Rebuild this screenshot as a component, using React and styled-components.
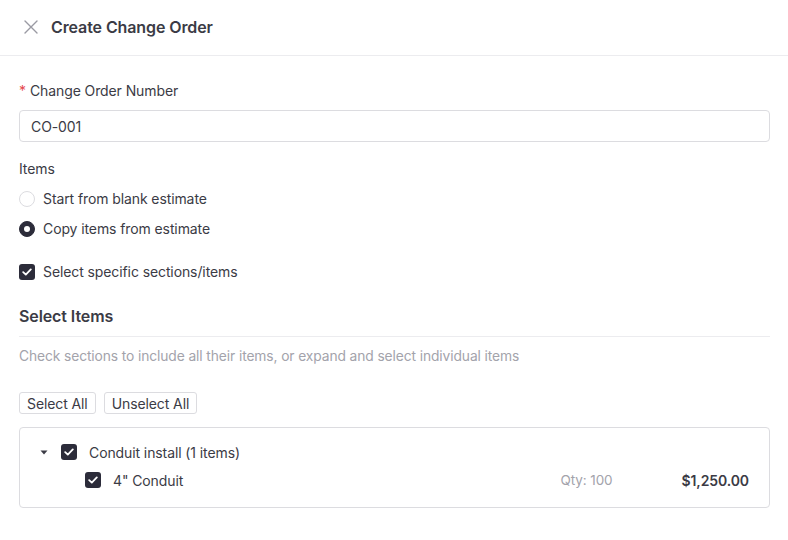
import React from "react";
import styled, { createGlobalStyle } from "styled-components";

const GlobalStyle = createGlobalStyle`
  html, body {
    margin: 0;
    padding: 0;
    background: #ffffff;
    font-family: Inter, "Noto Sans", sans-serif;
    color: #3b3b45;
    letter-spacing: -0.1px;
  }
  * { box-sizing: border-box; }
`;

const Page = styled.div`
  width: 788px;
  min-height: 540px;
  background: #fff;
`;

const Header = styled.div`
  height: 56px;
  display: flex;
  align-items: center;
  gap: 13px;
  padding: 0 22px 1px 24px;
  border-bottom: 1px solid #ececef;
`;

const CloseButton = styled.button`
  border: none;
  background: none;
  padding: 0;
  width: 14px;
  height: 14px;
  display: flex;
  cursor: pointer;
`;

const Title = styled.h1`
  margin: 0;
  font-size: 16px;
  font-weight: 600;
  color: #3b3b45;
`;

const Body = styled.div`
  padding: 24px 18px 0 19px;
`;

const Label = styled.div`
  font-size: 14px;
  color: #3b3b45;
  line-height: 22px;
  margin-bottom: 8px;
`;

const Required = styled.span`
  color: #e5484d;
  margin-right: 4px;
`;

const TextInput = styled.input`
  width: 100%;
  height: 32px;
  border: 1px solid #dcdce0;
  border-radius: 4px;
  padding: 0 11px;
  font-family: inherit;
  font-size: 14px;
  letter-spacing: -0.1px;
  color: #3b3b45;
  outline: none;
  margin-bottom: 16px;
`;

const OptionList = styled.div`
  display: flex;
  flex-direction: column;
  gap: 8px;
  margin-bottom: 21px;
`;

const Option = styled.label`
  display: flex;
  align-items: center;
  gap: 8px;
  font-size: 14px;
  line-height: 22px;
  color: #3b3b45;
`;

const Radio = styled.span`
  width: 16px;
  height: 16px;
  border-radius: 50%;
  flex-shrink: 0;
  border: 1px solid ${(p) => (p.$checked ? "#2c2c3a" : "#dcdce0")};
  background: ${(p) => (p.$checked ? "#2c2c3a" : "#fff")};
  display: flex;
  align-items: center;
  justify-content: center;

  &::after {
    content: "";
    width: 6px;
    height: 6px;
    border-radius: 50%;
    background: #fff;
    display: ${(p) => (p.$checked ? "block" : "none")};
  }
`;

const Box = styled.span`
  width: 16px;
  height: 16px;
  border-radius: 3px;
  flex-shrink: 0;
  background: #2c2c3a;
  display: flex;
  align-items: center;
  justify-content: center;
`;

const SectionTitle = styled.h2`
  margin: 21px 0 0;
  font-size: 16px;
  font-weight: 600;
  color: #3b3b45;
  line-height: 24px;
  padding-bottom: 8px;
  border-bottom: 1px solid #ececef;
`;

const Hint = styled.p`
  margin: 8px 0 0;
  font-size: 13.8px;
  line-height: 22px;
  color: #a3a3ab;
`;

const ButtonRow = styled.div`
  display: flex;
  gap: 8px;
  margin-top: 25px;
`;

const SmallButton = styled.button`
  height: 22px;
  padding: 0 7px;
  background: #fff;
  border: 1px solid #dcdce0;
  border-radius: 3px;
  font-family: inherit;
  font-size: 14px;
  letter-spacing: -0.1px;
  color: #3b3b45;
  cursor: pointer;
`;

const TreeBox = styled.div`
  margin-top: 13px;
  border: 1px solid #dcdce0;
  border-radius: 4px;
  padding: 10px 20px 13px 20px;
`;

const TreeRow = styled.div`
  display: flex;
  align-items: center;
  height: 28px;
  padding-left: ${(p) => p.$indent}px;
  font-size: 14px;
  color: #3b3b45;
`;

const Caret = styled.span`
  width: 8px;
  margin-right: 13px;
  display: flex;
  justify-content: center;
`;

const RowText = styled.span`
  margin-left: 12px;
  flex: 1;
`;

const Qty = styled.span`
  font-size: 13.5px;
  color: #a3a3ab;
  width: 121px;
`;

const Price = styled.span`
  font-weight: 600;
  color: #3b3b45;
`;

const Check = () => (
  <svg width="10" height="8" viewBox="0 0 10 8" fill="none">
    <path d="M1.2 4.2 L3.8 6.6 L8.8 1.4" stroke="#fff" strokeWidth="1.8" strokeLinecap="round" strokeLinejoin="round" />
  </svg>
);

const App = () => {
  return (
    <Page>
      <GlobalStyle />
      <Header>
        <CloseButton aria-label="Close">
          <svg width="14" height="14" viewBox="0 0 14 14">
            <path d="M1 1 L13 13 M13 1 L1 13" stroke="#9a9aa3" strokeWidth="1.4" strokeLinecap="round" />
          </svg>
        </CloseButton>
        <Title>Create Change Order</Title>
      </Header>
      <Body>
        <Label>
          <Required>*</Required>Change Order Number
        </Label>
        <TextInput defaultValue="CO-001" />

        <Label>Items</Label>
        <OptionList>
          <Option>
            <Radio />
            Start from blank estimate
          </Option>
          <Option>
            <Radio $checked />
            Copy items from estimate
          </Option>
        </OptionList>

        <Option>
          <Box>
            <Check />
          </Box>
          Select specific sections/items
        </Option>

        <SectionTitle>Select Items</SectionTitle>
        <Hint>Check sections to include all their items, or expand and select individual items</Hint>

        <ButtonRow>
          <SmallButton>Select All</SmallButton>
          <SmallButton>Unselect All</SmallButton>
        </ButtonRow>

        <TreeBox>
          <TreeRow $indent={0}>
            <Caret>
              <svg width="8" height="5" viewBox="0 0 8 5">
                <path d="M0.5 0.5 L7.5 0.5 L4 4.5 Z" fill="#3b3b45" />
              </svg>
            </Caret>
            <Box>
              <Check />
            </Box>
            <RowText>Conduit install (1 items)</RowText>
          </TreeRow>
          <TreeRow $indent={45}>
            <Box>
              <Check />
            </Box>
            <RowText>4" Conduit</RowText>
            <Qty>Qty: 100</Qty>
            <Price>$1,250.00</Price>
          </TreeRow>
        </TreeBox>
      </Body>
    </Page>
  );
};

export default App;
